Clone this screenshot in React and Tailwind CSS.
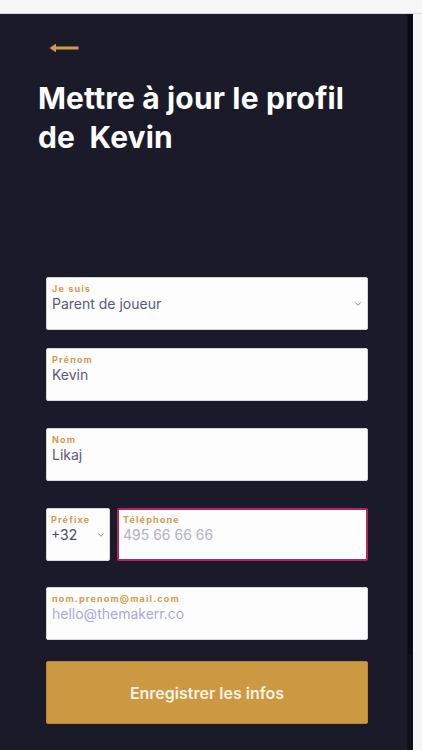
import React from "react";

const font = { fontFamily: "Inter, 'Open Sans', sans-serif" };

function Label({ children }) {
  return (
    <div className="text-[9px] leading-[11px] font-bold tracking-[0.13em] text-[#d29b4c]">
      {children}
    </div>
  );
}

function Chevron() {
  return (
    <svg width="8" height="6" viewBox="0 0 8 6" className="shrink-0">
      <path d="M1.5 1.8 L4 4.2 L6.5 1.8" fill="none" stroke="#8a8a9a" strokeWidth="1" strokeLinecap="round" />
    </svg>
  );
}

function Field({ label, value, valueClass = "text-[#5b5a78]", className = "", chevron = false }) {
  return (
    <div className={`h-[53px] bg-[#fdfdfe] rounded-[2px] border border-[#d6d6de] px-[5px] pt-[5px] ${className}`}>
      <Label>{label}</Label>
      <div className="flex items-center justify-between">
        <div className={`text-[14px] leading-[18px] mt-[1px] ${valueClass}`}>{value}</div>
        {chevron && <Chevron />}
      </div>
    </div>
  );
}

export default function App() {
  return (
    <div className="w-[422px] h-[750px] bg-[#f6f6f8] flex flex-col overflow-hidden" style={font}>
      <div className="h-[14px] shrink-0 bg-[#f6f6f8] border-b border-[#d9d9e1]" />
      <div className="flex flex-1">
        <div className="w-[407px] bg-[#1a1a28] flex flex-col">
          <div className="pl-[49px] pt-[29px]">
            <svg width="30" height="10" viewBox="0 0 30 10">
              <path d="M0.5 5 L7 0.8 L7 3.6 L29.5 3.6 L29.5 6.4 L7 6.4 L7 9.2 Z" fill="#d29b4c" />
            </svg>
          </div>
          <h1 className="pl-[38px] mt-[26px] text-[30px] leading-[39px] font-bold text-white tracking-[0.005em] whitespace-pre">
            {"Mettre à jour le profil\nde  Kevin"}
          </h1>
          <div className="mx-[46px] mt-[120px] flex flex-col w-[322px]">
            <Field label="Je suis" value="Parent de joueur" chevron />
            <Field label="Prénom" value="Kevin" className="mt-[18px]" />
            <Field label="Nom" value="Likaj" className="mt-[27px]" />
            <div className="mt-[27px] flex gap-[7px]">
              <div className="w-[64px] h-[53px] bg-[#fdfdfe] rounded-[2px] border border-[#d6d6de] px-[4px] pt-[5px]">
                <Label>Préfixe</Label>
                <div className="flex items-center justify-between">
                  <div className="text-[14px] leading-[18px] mt-[1px] text-[#4b4a66]">+32</div>
                  <Chevron />
                </div>
              </div>
              <div className="flex-1 h-[53px] bg-[#fdfdfe] rounded-[2px] border-2 border-[#b3285c] px-[4px] pt-[4px]">
                <Label>Téléphone</Label>
                <div className="text-[14px] leading-[18px] mt-[1px] text-[#b4b4bc]">495 66 66 66</div>
              </div>
            </div>
            <Field label="nom.prenom@mail.com" value="hello@themakerr.co" valueClass="text-[#aaa8e2]" className="mt-[26px]" />
            <button className="mt-[21px] h-[63px] bg-[#cc9841] rounded-[2px] border border-[#b8863a] text-[#fbf3e4] text-[16px] font-semibold">
              Enregistrer les infos
            </button>
          </div>
        </div>
        <div className="w-[6px] bg-[#11111b] relative">
          <div className="absolute left-[1px] top-0 w-[4px] h-[641px] bg-[#0a0a12] rounded-[2px]" />
        </div>
        <div className="flex-1 bg-[#f6f6f8]" />
      </div>
    </div>
  );
}
